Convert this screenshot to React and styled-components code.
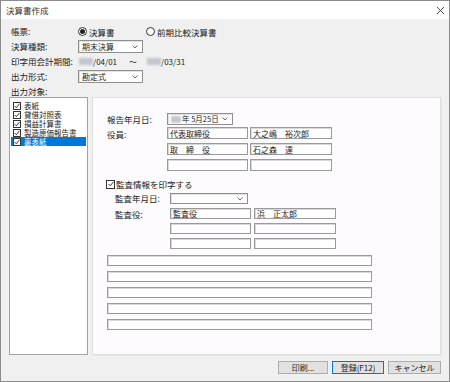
import React from 'react';
import styled, { createGlobalStyle } from 'styled-components';

const GlobalStyle = createGlobalStyle`
  html, body {
    margin: 0;
    padding: 0;
    background: #ffffff;
  }
  * {
    box-sizing: border-box;
  }
`;

const font = `"Noto Sans CJK JP", "Noto Sans", sans-serif`;

const Window = styled.div`
  width: 450px;
  height: 382px;
  border: 1px solid #8c8c8c;
  background: #f0f0f0;
  font-family: ${font};
  font-size: 8.5px;
  color: #1a1a1a;
  display: flex;
  flex-direction: column;
`;

const TitleBar = styled.div`
  height: 18px;
  background: #ffffff;
  display: flex;
  align-items: center;
  justify-content: space-between;
  padding: 0 4px 0 5px;
  font-size: 8.5px;
  color: #333;
`;

const Body = styled.div`
  flex: 1;
  display: flex;
  flex-direction: column;
  padding: 5px 8px 0 8px;
`;

const FormGrid = styled.div`
  display: grid;
  grid-template-columns: 67px 1fr;
  grid-auto-rows: 15px;
  align-items: center;
  padding-left: 2px;
`;

const Label = styled.div`
  white-space: nowrap;
  line-height: 1;
`;

const RadioGroup = styled.div`
  display: flex;
  align-items: center;
`;

const RadioItem = styled.label`
  display: flex;
  align-items: center;
  gap: 2px;
  width: ${(p) => p.$width || 'auto'};
`;

const RadioCircle = styled.span`
  width: 9px;
  height: 9px;
  border-radius: 50%;
  border: 1px solid #333;
  background: #fff;
  display: flex;
  align-items: center;
  justify-content: center;
  &::after {
    content: '';
    width: 5px;
    height: 5px;
    border-radius: 50%;
    background: ${(p) => (p.$checked ? '#222' : 'transparent')};
  }
`;

const Select = styled.div`
  width: ${(p) => p.$width}px;
  height: ${(p) => p.$height || 12}px;
  background: #fff;
  border: 1px solid #8f8f8f;
  box-shadow: inset 1px 1px 0 #e2e2e2;
  display: flex;
  align-items: center;
  justify-content: space-between;
  padding: 0 4px 0 3px;
  font-size: 8px;
  line-height: 1;
  white-space: nowrap;
  svg {
    flex-shrink: 0;
  }
`;

const SelectValue = styled.span`
  display: flex;
  align-items: center;
  white-space: nowrap;
  font-size: ${(p) => p.$size || 8}px;
`;

const Chevron = () => (
  <svg width="6" height="4" viewBox="0 0 6 4">
    <path d="M0.5 0.5 L3 3 L5.5 0.5" fill="none" stroke="#555" strokeWidth="0.9" />
  </svg>
);

const Blur = styled.span`
  display: inline-block;
  flex-shrink: 0;
  width: ${(p) => p.$width}px;
  height: 7px;
  background: #c4c6cf;
  filter: blur(0.8px);
  margin-right: ${(p) => p.$gap || 0}px;
`;

const Period = styled.div`
  display: flex;
  align-items: center;
  font-size: 8px;
  padding-left: 1px;
`;

const Tilde = styled.span`
  margin: 0 10px 0 12px;
`;

const Content = styled.div`
  display: flex;
  gap: 4px;
  height: 258px;
  margin-top: -2px;
`;

const ListBox = styled.div`
  width: 79px;
  background: #fff;
  border: 1px solid #a3a3a3;
  padding: 3px 1px;
  display: flex;
  flex-direction: column;
`;

const ListItem = styled.div`
  height: 9px;
  display: flex;
  align-items: center;
  gap: 3px;
  padding-left: 2px;
  font-size: 7.5px;
  line-height: 9px;
  overflow: hidden;
  background: ${(p) => (p.$selected ? '#0078d7' : 'transparent')};
  color: ${(p) => (p.$selected ? '#fff' : '#1a1a1a')};
`;

const CheckBox = styled.span`
  width: ${(p) => p.$size || 8}px;
  height: ${(p) => p.$size || 8}px;
  border: 1px solid #333;
  background: #fff;
  display: flex;
  align-items: center;
  justify-content: center;
  flex-shrink: 0;
`;

const Check = () => (
  <svg width="6" height="6" viewBox="0 0 6 6">
    <path d="M0.6 3 L2.3 4.8 L5.5 0.8" fill="none" stroke="#222" strokeWidth="0.9" />
  </svg>
);

const Panel = styled.div`
  flex: 1;
  background: #fdfbfd;
  border: 1px solid #dedede;
  box-shadow: 1px 1px 0 #e6e6e6;
  padding: 15px 0 0 14px;
  display: flex;
  flex-direction: column;
`;

const PanelRow = styled.div`
  display: flex;
  align-items: ${(p) => p.$align || 'center'};
  margin-top: ${(p) => p.$top || 0}px;
  padding-left: ${(p) => p.$indent || 0}px;
`;

const PanelLabel = styled.div`
  width: ${(p) => p.$width}px;
  line-height: 1;
  padding-top: ${(p) => p.$pt || 0}px;
  white-space: nowrap;
`;

const InputGrid = styled.div`
  display: grid;
  grid-template-columns: ${(p) => p.$cols};
  column-gap: ${(p) => p.$colGap || 2}px;
  row-gap: ${(p) => p.$rowGap || 4}px;
`;

const Input = styled.div`
  height: ${(p) => p.$height || 12}px;
  background: #fff;
  border: 1px solid #9a9a9a;
  box-shadow: inset 1px 1px 0 #d9d9d9;
  font-size: 8px;
  line-height: 1;
  padding: 1px 2px 0;
  display: flex;
  align-items: center;
  white-space: pre;
`;

const CheckRow = styled.label`
  display: flex;
  align-items: center;
  gap: 1px;
  margin-top: 7px;
  margin-left: -1px;
`;

const Footer = styled.div`
  display: flex;
  justify-content: flex-end;
  gap: 4px;
  padding-top: 6px;
`;

const Button = styled.button`
  width: ${(p) => p.$width}px;
  height: 13px;
  padding: 0;
  background: #e1e1e1;
  border: 1px solid ${(p) => (p.$focused ? '#0078d7' : '#adadad')};
  font-family: ${font};
  font-size: 8px;
  line-height: 1;
  color: #1a1a1a;
`;

export default function App() {
  return (
    <>
      <GlobalStyle />
      <Window>
        <TitleBar>
          <span>決算書作成</span>
          <svg width="9" height="9" viewBox="0 0 9 9">
            <path d="M1 1 L8 8 M8 1 L1 8" stroke="#333" strokeWidth="0.9" />
          </svg>
        </TitleBar>
        <Body>
          <FormGrid>
            <Label>帳票:</Label>
            <RadioGroup>
              <RadioItem $width="68px">
                <RadioCircle $checked />
                <span>決算書</span>
              </RadioItem>
              <RadioItem>
                <RadioCircle />
                <span>前期比較決算書</span>
              </RadioItem>
            </RadioGroup>

            <Label>決算種類:</Label>
            <Select $width={65} $height={13}>
              <SelectValue>期末決算</SelectValue>
              <Chevron />
            </Select>

            <Label>印字用会計期間:</Label>
            <Period>
              <Blur $width={14} />
              <span>/04/01</span>
              <Tilde>〜</Tilde>
              <Blur $width={14} />
              <span>/03/31</span>
            </Period>

            <Label>出力形式:</Label>
            <Select $width={65} $height={13}>
              <SelectValue>勘定式</SelectValue>
              <Chevron />
            </Select>

            <Label>出力対象:</Label>
            <div />
          </FormGrid>

          <Content>
            <ListBox>
              {['表紙', '貸借対照表', '損益計算書', '製造原価報告書', '裏表紙'].map((t, i) => (
                <ListItem key={t} $selected={i === 4}>
                  <CheckBox>
                    <Check />
                  </CheckBox>
                  <span>{t}</span>
                </ListItem>
              ))}
            </ListBox>

            <Panel>
              <PanelRow>
                <PanelLabel $width={60}>報告年月日:</PanelLabel>
                <Select $width={66}>
                  <SelectValue $size={7.5}>
                    <Blur $width={10} $gap={1} />
                    年 5月25日
                  </SelectValue>
                  <Chevron />
                </Select>
              </PanelRow>

              <PanelRow $align="flex-start" $top={2}>
                <PanelLabel $width={60} $pt={3}>役員:</PanelLabel>
                <InputGrid $cols="81px 82px" $colGap={2}>
                  <Input>代表取締役</Input>
                  <Input>大之嶋　裕次郎</Input>
                  <Input>取　締　役</Input>
                  <Input>石之森　達</Input>
                  <Input />
                  <Input />
                </InputGrid>
              </PanelRow>

              <CheckRow>
                <CheckBox $size={9}>
                  <Check />
                </CheckBox>
                <span>監査情報を印字する</span>
              </CheckRow>

              <PanelRow $top={3} $indent={8}>
                <PanelLabel $width={55}>監査年月日:</PanelLabel>
                <Select $width={78} $height={11}>
                  <span />
                  <Chevron />
                </Select>
              </PanelRow>

              <PanelRow $align="flex-start" $top={4} $indent={8}>
                <PanelLabel $width={55} $pt={2}>監査役:</PanelLabel>
                <InputGrid $cols="81px 82px" $colGap={3} $rowGap={4}>
                  <Input $height={11}>監査役</Input>
                  <Input $height={11}>浜　正太郎</Input>
                  <Input $height={11} />
                  <Input $height={11} />
                  <Input $height={11} />
                  <Input $height={11} />
                </InputGrid>
              </PanelRow>

              <PanelRow $top={6}>
                <InputGrid $cols="265px" $rowGap={5}>
                  <Input $height={11} />
                  <Input $height={11} />
                  <Input $height={11} />
                  <Input $height={11} />
                  <Input $height={11} />
                </InputGrid>
              </PanelRow>
            </Panel>
          </Content>

          <Footer>
            <Button $width={50}>印刷...</Button>
            <Button $width={52} $focused>登録(F12)</Button>
            <Button $width={53}>キャンセル</Button>
          </Footer>
        </Body>
      </Window>
    </>
  );
}
